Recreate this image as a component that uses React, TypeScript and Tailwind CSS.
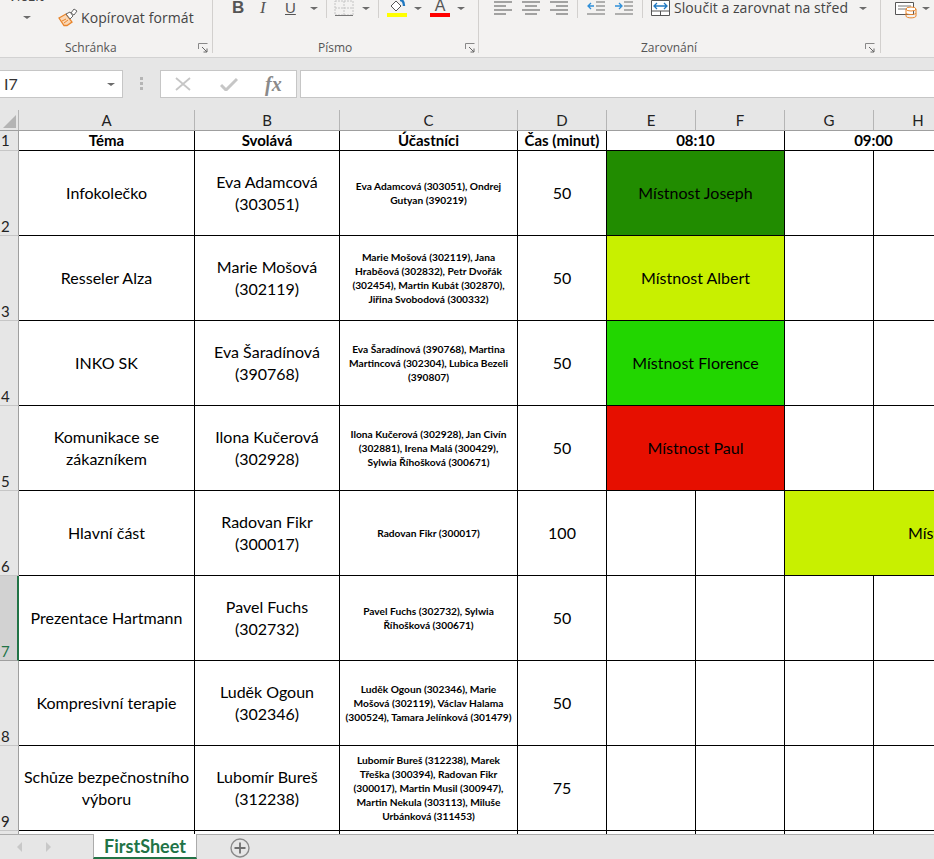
// dependencies
import React from 'react'

// types
type Row = {
  no: number
  topic: string | string[]
  owner: string[]
  people: string[]
  mins: number
  room?: { name: string; color: string }
  wide?: boolean
}

const ROWS: Row[] = [
  {
    no: 2,
    topic: 'Infokolečko',
    owner: ['Eva Adamcová', '(303051)'],
    people: ['Eva Adamcová (303051), Ondrej', 'Gutyan (390219)'],
    mins: 50,
    room: { name: 'Místnost Joseph', color: 'bg-[#218c00]' }
  },
  {
    no: 3,
    topic: 'Resseler Alza',
    owner: ['Marie Mošová', '(302119)'],
    people: [
      'Marie Mošová (302119), Jana',
      'Hraběová (302832), Petr Dvořák',
      '(302454), Martin Kubát (302870),',
      'Jiřina Svobodová (300332)'
    ],
    mins: 50,
    room: { name: 'Místnost Albert', color: 'bg-[#c8f000]' }
  },
  {
    no: 4,
    topic: 'INKO SK',
    owner: ['Eva Šaradínová', '(390768)'],
    people: ['Eva Šaradínová (390768), Martina', 'Martincová (302304), Lubica Bezeli', '(390807)'],
    mins: 50,
    room: { name: 'Místnost Florence', color: 'bg-[#22d600]' }
  },
  {
    no: 5,
    topic: ['Komunikace se', 'zákazníkem'],
    owner: ['Ilona Kučerová', '(302928)'],
    people: [
      'Ilona Kučerová (302928), Jan Civín',
      '(302881), Irena Malá (300429),',
      'Sylwia Říhošková (300671)'
    ],
    mins: 50,
    room: { name: 'Místnost Paul', color: 'bg-[#e60f00]' }
  },
  {
    no: 6,
    topic: 'Hlavní část',
    owner: ['Radovan Fikr', '(300017)'],
    people: ['Radovan Fikr (300017)'],
    mins: 100,
    room: { name: 'Místnost Albert', color: 'bg-[#c8f000]' },
    wide: true
  },
  {
    no: 7,
    topic: 'Prezentace Hartmann',
    owner: ['Pavel Fuchs', '(302732)'],
    people: ['Pavel Fuchs (302732), Sylwia', 'Říhošková (300671)'],
    mins: 50
  },
  {
    no: 8,
    topic: 'Kompresivní terapie',
    owner: ['Luděk Ogoun', '(302346)'],
    people: [
      'Luděk Ogoun (302346), Marie',
      'Mošová (302119), Václav Halama',
      '(300524), Tamara Jelínková (301479)'
    ],
    mins: 50
  },
  {
    no: 9,
    topic: ['Schůze bezpečnostního', 'výboru'],
    owner: ['Lubomír Bureš', '(312238)'],
    people: [
      'Lubomír Bureš (312238), Marek',
      'Třeška (300394), Radovan Fikr',
      '(300017), Martin Musil (300947),',
      'Martin Nekula (303113), Miluše',
      'Urbánková (311453)'
    ],
    mins: 75
  }
]

const COLUMNS = ['A', 'B', 'C', 'D', 'E', 'F', 'G', 'H', 'I', 'J']

// row header + A..J, runs past the window like the real sheet
const GRID =
  'grid grid-cols-[19px_176px_145px_178px_89px_89px_89px_89px_89px_89px_89px] w-[1141px]'

const Caret = ({ className = '' }: { className?: string }) => (
  <span
    className={`w-0 h-0 shrink-0 border-x-[4px] border-x-transparent border-t-[3px] border-t-[#6b6b6b] ${className}`}
  />
)

const Sep = ({ className = '' }: { className?: string }) => (
  <span className={`w-px h-[20px] shrink-0 bg-[#d2d0ce] ${className}`} />
)

const Launcher = ({ className = '' }: { className?: string }) => (
  <svg width="10" height="10" viewBox="0 0 10 10" className={`shrink-0 ${className}`}>
    <path d="M0.500 6V0.500H9.500" stroke="#888" fill="none" />
    <path d="M4 4l5 5M9 5.500V9H5.500" stroke="#666" fill="none" />
  </svg>
)

const Lines = ({ kind }: { kind: 'left' | 'center' | 'right' }) => {
  const rows =
    kind === 'left'
      ? [[0, 18], [0, 12], [0, 18], [0, 12]]
      : kind === 'center'
        ? [[0, 18], [3, 15], [0, 18], [3, 15]]
        : [[0, 18], [6, 18], [0, 18], [6, 18]]
  return (
    <svg width="18" height="16" viewBox="0 0 18 16" className="shrink-0">
      {rows.map(([a, b], i) => (
        <path key={i} d={`M${a} ${2 + i * 4}H${b}`} stroke="#6d6d6d" strokeWidth="1.200" />
      ))}
    </svg>
  )
}

const Indent = ({ flip }: { flip?: boolean }) => (
  <svg width="18" height="16" viewBox="0 0 18 16" className="shrink-0">
    <path d={flip ? 'M0 6H6M4 3l3 3-3 3' : 'M7 6H1M4 3L1 6l3 3'} stroke="#2f8fd8" strokeWidth="1.300" fill="none" />
    <path d="M9 2H18M9 6H18M9 10H18M0 14H18" stroke="#6d6d6d" strokeWidth="1.200" />
  </svg>
)

const Ribbon = () => (
  <div className="h-[58px] shrink-0 bg-[#f3f2f1] border-b border-[#d2d2d2] flex overflow-hidden text-[#444] font-['Open_Sans',sans-serif]">
    {/* Schránka */}
    <div className="w-[213px] shrink-0 border-r border-[#d2d0ce] h-[53px] flex flex-col">
      <div className="flex h-[39px] shrink-0">
        <div className="w-[54px] flex flex-col items-center">
          <span className="text-[14px] leading-[18px] -mt-[13px] pr-[2px]">Vložit</span>
          <Caret className="mt-[11px]" />
        </div>
        <div className="flex items-start pt-[8px] pl-[4px]">
          <svg width="20" height="19" viewBox="0 0 20 19" className="shrink-0">
            <path d="M1 10l7-4 6 8-5 3.500H6L1 10z" fill="#fbd7b4" stroke="#e8852c" strokeWidth="1.300" />
            <path d="M4 13l4-2M6 15l4-3" stroke="#e8852c" />
            <path d="M8 6l4-2 3 4-3 3z" fill="#fff" stroke="#666" />
            <path d="M13 5l3-4 3 2-3 4z" fill="#fff" stroke="#666" />
          </svg>
          <span className="text-[14px] leading-[20px] ml-[3px] tracking-[0.1px]">Kopírovat formát</span>
        </div>
      </div>
      <div className="flex items-center h-[18px] shrink-0">
        <span className="ml-[65px] text-[12px] leading-[18px] text-[#555]">Schránka</span>
        <Launcher className="ml-[81px]" />
      </div>
    </div>

    {/* Písmo */}
    <div className="w-[266px] shrink-0 border-r border-[#d2d0ce] h-[53px] flex flex-col">
      <div className="flex items-center h-[39px] shrink-0 pb-[23px]">
        <span className="ml-[19px] w-[12px] shrink-0 text-[17px] font-bold font-['Liberation_Sans',sans-serif] text-[#555]">B</span>
        <span className="ml-[16px] w-[10px] shrink-0 text-[17px] italic font-['Liberation_Serif',serif] text-[#555]">I</span>
        <span className="ml-[15px] w-[14px] shrink-0 text-[15px] underline font-['Liberation_Sans',sans-serif] text-[#555]">U</span>
        <Caret className="ml-[11px]" />
        <Sep className="ml-[8px]" />
        <svg width="20" height="17" viewBox="0 0 20 17" className="ml-[7px] shrink-0">
          <path d="M1 1H19V15H1ZM10 1V15M1 8H19" stroke="#c4c4c4" fill="none" strokeDasharray="2 1" />
          <path d="M1 15.500H19" stroke="#777" />
        </svg>
        <Caret className="ml-[8px]" />
        <Sep className="ml-[8px]" />
        <div className="ml-[8px] w-[20px] shrink-0 flex flex-col items-center">
          <svg width="18" height="14" viewBox="0 0 18 14" className="shrink-0">
            <path d="M3 7l5-5 5 5-5 5z" fill="#fff" stroke="#555" />
            <path d="M12 1c3 0 4 3 4 6" stroke="#1f78c1" strokeWidth="2.400" fill="none" />
          </svg>
          <span className="w-[20px] h-[4px] bg-[#ffff00]" />
        </div>
        <Caret className="ml-[7px]" />
        <div className="ml-[8px] w-[20px] shrink-0 flex flex-col items-center">
          <span className="text-[16px] leading-[14px] h-[14px] font-['Liberation_Sans',sans-serif] text-[#555]">A</span>
          <span className="w-[20px] h-[4px] bg-[#ff0000]" />
        </div>
        <Caret className="ml-[7px]" />
      </div>
      <div className="flex items-center h-[18px] shrink-0">
        <span className="ml-[105px] text-[12px] leading-[18px] text-[#555]">Písmo</span>
        <Launcher className="ml-[113px]" />
      </div>
    </div>

    {/* Zarovnání */}
    <div className="w-[402px] shrink-0 border-r border-[#d2d0ce] h-[53px] flex flex-col">
      <div className="flex items-center h-[39px] shrink-0 pb-[23px]">
        <span className="ml-[15px]"><Lines kind="left" /></span>
        <span className="ml-[10px]"><Lines kind="center" /></span>
        <span className="ml-[10px]"><Lines kind="right" /></span>
        <Sep className="ml-[9px]" />
        <span className="ml-[9px]"><Indent /></span>
        <span className="ml-[10px]"><Indent flip /></span>
        <Sep className="ml-[9px]" />
        <svg width="19" height="16" viewBox="0 0 19 16" className="ml-[8px] shrink-0">
          <path d="M0.500 0.500H18.500V15.500H0.500Z" fill="#fff" stroke="#555" />
          <path d="M0.500 11H18.500M9.500 11V15.500" stroke="#555" />
          <path d="M3 6H16M6 3L3 6l3 3M13 3l3 3-3 3" stroke="#1f78c1" strokeWidth="1.300" fill="none" />
        </svg>
        <span className="text-[14px] leading-[20px] ml-[4px] whitespace-nowrap tracking-[0.05px]">Sloučit a zarovnat na střed</span>
        <Caret className="ml-[11px]" />
      </div>
      <div className="flex items-center h-[18px] shrink-0">
        <span className="ml-[162px] text-[12px] leading-[18px] text-[#555]">Zarovnání</span>
        <Launcher className="ml-[168px]" />
      </div>
    </div>

    {/* next group, cut off by the window */}
    <div className="flex items-start pt-[1px] pl-[14px]">
      <svg width="22" height="18" viewBox="0 0 22 18" className="shrink-0">
        <path d="M0.500 1.500H18.500V13.500H0.500Z" fill="#fff" stroke="#555" />
        <path d="M3 5H16M3 8H12" stroke="#777" />
        <ellipse cx="16" cy="8" rx="5" ry="2" fill="#fff" stroke="#e8852c" />
        <path d="M11 8V15c0 2.500 10 2.500 10 0V8M11 12c0 2 10 2 10 0" fill="none" stroke="#e8852c" />
      </svg>
      <Caret className="ml-[5px] mt-[6px]" />
    </div>
  </div>
)

const FormulaBar = () => (
  <div className="h-[52px] shrink-0 bg-[#e6e6e6] flex items-start pt-[12px] font-['Lato',sans-serif]">
    <div className="w-[123px] h-[28px] bg-white border border-[#c6c6c6] border-l-0 flex items-center justify-between pl-[4px] pr-[7px] text-[16px] text-[#333]">
      <span>I7</span>
      <Caret />
    </div>
    <div className="w-[37px] flex flex-col items-center gap-[2px] pt-[7px]">
      <span className="w-[3px] h-[3px] bg-[#b5b5b5]" />
      <span className="w-[3px] h-[3px] bg-[#b5b5b5]" />
      <span className="w-[3px] h-[3px] bg-[#b5b5b5]" />
    </div>
    <div className="w-[137px] h-[28px] bg-white border border-[#c6c6c6] flex items-center">
      <svg width="16" height="14" viewBox="0 0 16 14" className="ml-[14px] shrink-0">
        <path d="M1 1l14 12M15 1L1 13" stroke="#c6c6c6" strokeWidth="1.800" />
      </svg>
      <svg width="18" height="14" viewBox="0 0 18 14" className="ml-[29px] shrink-0">
        <path d="M1 8l5 5L17 2" stroke="#c6c6c6" strokeWidth="3" fill="none" />
      </svg>
      <span className="ml-[27px] text-[20px] leading-none italic font-bold font-['Liberation_Serif',serif] text-[#8a8a8a]">fx</span>
    </div>
    <div className="ml-[3px] flex-1 h-[28px] bg-white border border-r-0 border-[#c6c6c6]" />
  </div>
)

const HeaderCell = ({ children, className = '' }: { children: React.ReactNode; className?: string }) => (
  <div className={`border-r border-b border-black flex items-center justify-center h-[20px] font-bold text-[15px] leading-none text-black whitespace-nowrap ${className}`}>
    {children}
  </div>
)

const Cell = ({ children, className = '' }: { children?: React.ReactNode; className?: string }) => (
  <div className={`border-r border-b border-black flex flex-col items-center justify-center text-center text-black ${className}`}>
    {children}
  </div>
)

const asLines = (value: string | string[]) =>
  Array.isArray(value) ? value.map((line) => <span key={line}>{line}</span>) : value

const RowHead = ({ no }: { no: number }) => {
  const active = no === 7
  return (
    <div
      className={`flex items-end pl-[1px] text-[15px] leading-[18px] border-r border-b ${
        active
          ? 'bg-[#d2d2d2] border-r-[2px] border-r-[#217346] border-b-[#9f9f9f] text-[#217346]'
          : 'bg-[#e6e6e6] border-r-[#9f9f9f] border-b-[#c6c6c6] text-[#222]'
      }`}
    >
      {no}
    </div>
  )
}

const Sheet = () => (
  <div className="h-[724px] shrink-0 overflow-hidden font-['Lato',sans-serif]">
    {/* column letters */}
    <div className={`${GRID} h-[21px] bg-[#e6e6e6] border-b border-[#9f9f9f]`}>
      <div className="border-r border-[#b5b5b5] flex items-end justify-center pb-[2px]">
        <span className="w-0 h-0 border-l-[13px] border-l-transparent border-b-[13px] border-b-[#b4b4b4]" />
      </div>
      {COLUMNS.map((col) => (
        <div key={col} className="border-r border-[#b5b5b5] flex items-center justify-center pt-[1px] text-[15px] leading-none text-[#222]">
          {col}
        </div>
      ))}
    </div>

    {/* header row */}
    <div className={GRID}>
      <div className="h-[20px] bg-[#e6e6e6] border-r border-b border-r-[#9f9f9f] border-b-[#c6c6c6] flex items-center pl-[1px] text-[15px] text-[#222]">1</div>
      <HeaderCell>Téma</HeaderCell>
      <HeaderCell>Svolává</HeaderCell>
      <HeaderCell>Účastníci</HeaderCell>
      <HeaderCell>Čas (minut)</HeaderCell>
      <HeaderCell className="col-span-2">08:10</HeaderCell>
      <HeaderCell className="col-span-2">09:00</HeaderCell>
      <HeaderCell className="col-span-2">09:50</HeaderCell>
    </div>

    {/* data rows */}
    {ROWS.map((row) => (
      <div key={row.no} className={`${GRID} h-[85px]`}>
        <RowHead no={row.no} />
        <Cell className="text-[16px] leading-[22px] whitespace-nowrap">{asLines(row.topic)}</Cell>
        <Cell className="text-[16px] leading-[22px] whitespace-nowrap">{asLines(row.owner)}</Cell>
        <Cell className="text-[10.2px] leading-[14px] font-bold whitespace-nowrap">
          {row.people.map((line) => (
            <span key={line}>{line}</span>
          ))}
        </Cell>
        <Cell className="text-[16px]">{row.mins}</Cell>
        {row.room && !row.wide && (
          <Cell className={`col-span-2 text-[16px] ${row.room.color}`}>{row.room.name}</Cell>
        )}
        {(!row.room || row.wide) && (
          <>
            <Cell />
            <Cell />
          </>
        )}
        {row.wide ? (
          <Cell className={`col-span-4 text-[16px] ${row.room?.color}`}>{row.room?.name}</Cell>
        ) : (
          <>
            <Cell />
            <Cell />
            <Cell />
            <Cell />
          </>
        )}
      </div>
    ))}

    {/* row 10, only its top edge is visible */}
    <div className={`${GRID} h-[20px]`}>
      <div className="bg-[#e6e6e6] border-r border-[#9f9f9f]" />
      {COLUMNS.map((col) => (
        <div key={col} className="border-r border-black" />
      ))}
    </div>
  </div>
)

const Tabs = () => (
  <div className="flex-1 bg-[#e6e6e6] border-t border-[#ababab] flex items-start font-['Lato',sans-serif]">
    <div className="w-[93px] h-[24px] flex items-center shrink-0">
      <span className="ml-[17px] w-0 h-0 border-y-[5px] border-y-transparent border-r-[5px] border-r-[#c8c8c8]" />
      <span className="ml-[24px] w-0 h-0 border-y-[5px] border-y-transparent border-l-[5px] border-l-[#c8c8c8]" />
    </div>
    <div className="w-[104px] h-[25px] -mt-px bg-white border-x border-[#ababab] border-b-[2px] border-b-[#217346] flex items-center justify-center text-[18px] font-bold text-[#217346] leading-none">
      FirstSheet
    </div>
    <svg width="20" height="20" viewBox="0 0 20 20" className="ml-[33px] mt-[3px] shrink-0">
      <circle cx="10" cy="10" r="9" fill="none" stroke="#8a8a8a" strokeWidth="1.400" />
      <path d="M10 4.500V15.500M4.500 10H15.500" stroke="#6f6f6f" strokeWidth="1.800" />
    </svg>
  </div>
)

const App: React.FC = () => {
  return (
    <div className="w-[934px] h-[859px] overflow-hidden flex flex-col bg-white">
      <Ribbon />
      <FormulaBar />
      <Sheet />
      <Tabs />
    </div>
  )
}

export default App
